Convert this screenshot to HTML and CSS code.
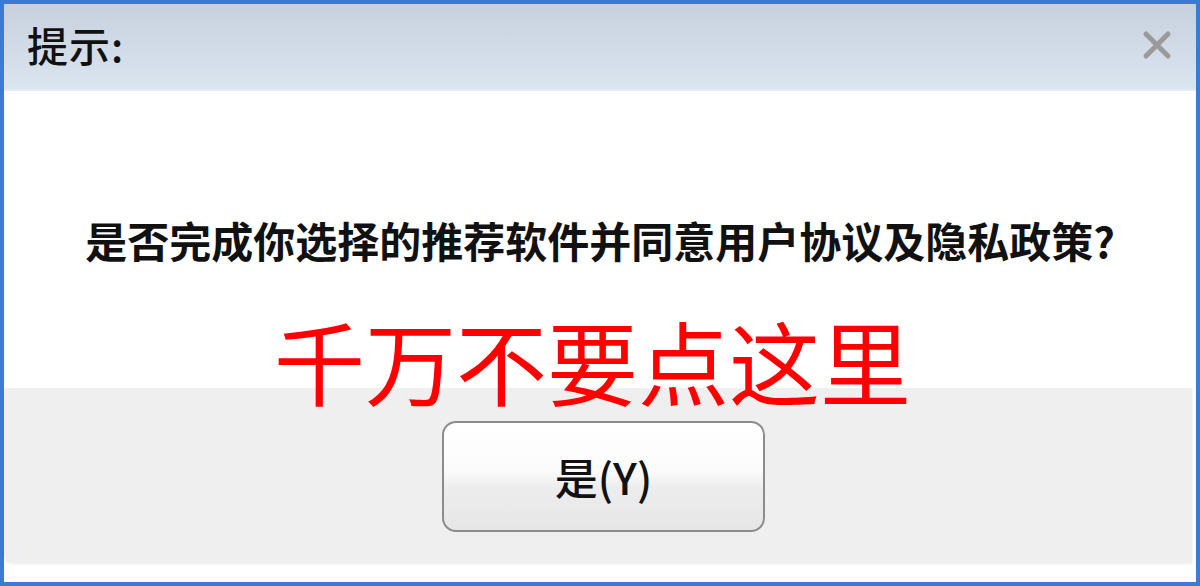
FILE: index.html
```html
<!DOCTYPE html>
<html lang="zh-CN">
<head>
<meta charset="utf-8">
<title>提示</title>
<link rel="stylesheet" href="styles.css">
</head>
<body>
<div class="window">
  <div class="titlebar">
    <span class="title">提示:</span>
    <svg class="close" viewBox="0 0 30 30" width="30" height="30" aria-hidden="true">
      <path d="M4 4 L26 26 M26 4 L4 26" stroke="#9a9a9a" stroke-width="5" stroke-linecap="round" fill="none"/>
    </svg>
  </div>
  <div class="content">
    <p class="message">是否完成你选择的推荐软件并同意用户协议及隐私政策?</p>
  </div>
  <div class="footer">
    <div class="panel">
      <button class="btn">是(Y)</button>
    </div>
  </div>
  <div class="warning">千万不要点这里</div>
</div>
</body>
</html>
```
FILE: styles.css
```css
html, body {
  margin: 0;
  padding: 0;
  background: #ffffff;
}
body {
  font-family: "Noto Sans CJK SC", "Liberation Sans", sans-serif;
}
.window {
  position: relative;
  width: 1200px;
  height: 586px;
  box-sizing: border-box;
  border: 4px solid #3a7bd5;
  display: flex;
  flex-direction: column;
  background: #ffffff;
}
.titlebar {
  height: 85px;
  flex: none;
  display: flex;
  align-items: center;
  justify-content: space-between;
  padding: 0 24px 0 23px;
  background: linear-gradient(to bottom, #c7d1dd 0%, #d3dde9 60%, #dbe5f0 100%);
  border-bottom: 2px solid #e4ebf3;
}
.title {
  font-size: 41px;
  font-weight: 500;
  color: #111;
  line-height: 1;
  margin-top: -4px;
  letter-spacing: 1px;
}
.close {
  display: block;
  margin-top: -4px;
  filter: blur(0.6px);
}
.content {
  height: 297px;
  flex: none;
  display: flex;
  align-items: center;
  justify-content: center;
}
.message {
  margin: 0;
  font-size: 42px;
  font-weight: bold;
  color: #111;
  line-height: 1;
  white-space: nowrap;
}
.footer {
  flex: 1;
  padding: 0 4px 19px 0;
  display: flex;
}
.panel {
  flex: 1;
  background: #efefef;
  border-bottom-left-radius: 8px;
  box-shadow: 0 1px 3px rgba(0,0,0,0.08);
  display: flex;
  align-items: center;
  justify-content: center;
  padding-left: 11px;
}
.btn {
  width: 323px;
  height: 111px;
  box-sizing: border-box;
  border: 2px solid #8c8c8c;
  border-radius: 14px;
  background: linear-gradient(to bottom, #ffffff 0%, #fbfbfb 45%, #ededed 60%, #e6e6e6 100%);
  font-family: "Noto Sans CJK SC", "Liberation Sans", sans-serif;
  font-size: 43px;
  font-weight: 500;
  color: #111;
  line-height: 1;
  padding: 0;
  margin-top: 2px;
}
.warning {
  position: absolute;
  left: 270px;
  top: 310px;
  font-size: 91px;
  line-height: 1;
  color: #ff0000;
  white-space: nowrap;
}
```
